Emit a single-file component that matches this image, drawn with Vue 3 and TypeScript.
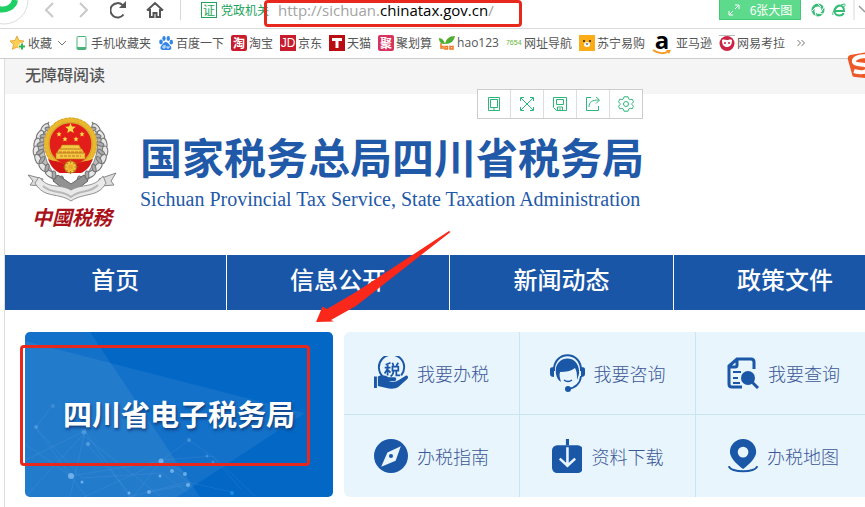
<script setup lang="ts">
interface Bookmark {
  id: string
  label: string
}

interface Service {
  id: string
  label: string
}

const bookmarks: Bookmark[] = [
  { id: 'phone', label: '手机收藏夹' },
  { id: 'baidu', label: '百度一下' },
  { id: 'taobao', label: '淘宝' },
  { id: 'jd', label: '京东' },
  { id: 'tmall', label: '天猫' },
  { id: 'ju', label: '聚划算' },
  { id: 'hao', label: 'hao123' },
  { id: 'nav', label: '网址导航' },
  { id: 'suning', label: '苏宁易购' },
  { id: 'amazon', label: '亚马逊' },
  { id: 'kaola', label: '网易考拉' },
]

const sections: string[] = ['首页', '信息公开', '新闻动态', '政策文件']

const services: Service[] = [
  { id: 'handle', label: '我要办税' },
  { id: 'consult', label: '我要咨询' },
  { id: 'query', label: '我要查询' },
  { id: 'guide', label: '办税指南' },
  { id: 'download', label: '资料下载' },
  { id: 'map', label: '办税地图' },
]

const leftGrain = [
  [19, 13, -50], [14, 20, -60], [11, 28, -75], [10, 36, -90], [12, 44, -110], [17, 52, -130], [24, 59, -145], [32, 64, -155],
]
const teeth = [0, 45, 90, 135, 180, 225, 270, 315]
</script>

<template>
  <div class="window">
    <header class="chrome">
      <svg class="browser-logo" viewBox="0 0 30 28" aria-hidden="true">
        <circle cx="4" cy="0" r="24" fill="#fff" stroke="#dcdcdc" />
        <path d="M-2 9C6 11 14 7 15 0" fill="none" stroke="#1fcf63" stroke-width="6" />
      </svg>
      <div class="controls">
        <button type="button" aria-label="后退"><svg viewBox="0 0 20 20"><path d="M13 3L6 10l7 7" fill="none" stroke="#c9c9c9" stroke-width="2" /></svg></button>
        <button type="button" aria-label="前进"><svg viewBox="0 0 20 20"><path d="M5 3l7 7-7 7" fill="none" stroke="#c9c9c9" stroke-width="2" /></svg></button>
        <button type="button" aria-label="刷新"><svg viewBox="0 0 20 20"><path d="M13.500 14.500A7.200 7.200 0 1 1 12.500 5" fill="none" stroke="#555" stroke-width="2" /><path d="M16 1v7H9z" fill="#555" /></svg></button>
        <button type="button" aria-label="主页"><svg viewBox="0 0 20 20"><path d="M2 10.500L10 3l8 7.500M5 9v8h3.500v-4h3v4H15V9" fill="none" stroke="#555" stroke-width="2" /></svg></button>
      </div>
      <div class="address">
        <span class="cert">证</span>
        <span class="org">党政机关</span>
        <span class="url">http://sichuan.<b>chinatax.gov.cn</b>/</span>
      </div>
      <button type="button" class="pictures">
        <svg viewBox="0 0 12 12" aria-hidden="true"><path d="M7 1h4v4M11 1L7 5M5 11H1V7M1 11l4-4" fill="none" stroke="#fff" /></svg>
        6张大图
      </button>
      <div class="extras">
        <svg viewBox="0 0 14 14" aria-hidden="true">
          <circle cx="7" cy="7" r="5" fill="none" stroke="#35bd75" stroke-width="3" />
          <path d="M6 0l4 4M13 4l-3 5M12 11l-6-1M5 13L4 8M1 8l4-4" stroke="#fff" />
        </svg>
        <svg viewBox="0 0 14 14" aria-hidden="true">
          <path d="M2.500 8H12C12 4 10 2.500 7.500 2.500S2.500 5 2.500 8s2.500 4.500 5 4.500c2 0 3.500-1 4-2.500" fill="none" stroke="#35bd75" stroke-width="2" />
          <path d="M1 12C-1 9 7 2 12 1c2 0 1 2 0 3" fill="none" stroke="#35bd75" />
        </svg>
        <svg class="more" viewBox="0 0 12 28" aria-hidden="true"><path d="M1 0v20" stroke="#d8d8d8" /><path d="M6 6l6 6" stroke="#999" stroke-width="1.500" /></svg>
      </div>
    </header>

    <nav class="bookmarks" aria-label="收藏夹">
      <a href="#" class="bookmark">
        <svg viewBox="0 0 16 16" aria-hidden="true">
          <path d="M7 1l2 4.500 5 .5-3.700 3.400 1 4.900L7 12l-4.500 2.300 1-5L0 6l5-.5z" fill="#fbcf55" stroke="#eda93a" />
          <path d="M12 8v7M8.500 11.500h7" stroke="#fff" stroke-width="4" /><path d="M12 8.500v6M9 11.500h6" stroke="#2fb457" stroke-width="2" />
        </svg>
        收藏
        <svg class="caret" viewBox="0 0 8 8" aria-hidden="true"><path d="M0 2l4 4 4-4" fill="none" stroke="#777" /></svg>
      </a>
      <a v-for="b in bookmarks" :key="b.id" href="#" class="bookmark" :class="b.id">
        <svg v-if="b.id === 'phone'" viewBox="0 0 16 16" aria-hidden="true"><rect x="4" y="1.500" width="9" height="13" rx="1" fill="#fff" stroke="#4bb379" /><path d="M4 13h9" stroke="#4bb379" stroke-width="2" /></svg>
        <svg v-else-if="b.id === 'baidu'" viewBox="0 0 16 16" aria-hidden="true">
          <g fill="#3385e8"><ellipse cx="3" cy="7" rx="1.800" ry="2.400" /><ellipse cx="6" cy="3.500" rx="1.700" ry="2.400" /><ellipse cx="10.300" cy="3.500" rx="1.700" ry="2.400" /><ellipse cx="13.300" cy="7.200" rx="1.700" ry="2.400" /><path d="M8 7c2 0 3 2.500 4.500 4s1 4-1.500 4H5c-3 0-3-3-1.500-4.500S6 7 8 7z" /></g>
          <path d="M7 10v3H5v-2h2M9 11v2h2v-2" fill="none" stroke="#fff" stroke-width=".8" />
        </svg>
        <span v-else-if="b.id === 'taobao'" class="badge">淘</span>
        <span v-else-if="b.id === 'jd'" class="badge latin">JD</span>
        <svg v-else-if="b.id === 'tmall'" viewBox="0 0 16 16" aria-hidden="true"><path d="M0 0h16v16H0z" fill="#b90d12" /><path d="M3 3h10v3H9.500v7h-3V6H3z" fill="#fff" /></svg>
        <span v-else-if="b.id === 'ju'" class="badge pink">聚</span>
        <svg v-else-if="b.id === 'hao'" viewBox="0 0 16 16" aria-hidden="true">
          <path d="M6 9C5 5 3 3 0 3c0 4 2 6 6 6zM6 9C7 4 10 1 16 1c-1 5-4 8-10 8z" fill="#4fae32" />
          <path d="M2 8v6M2 11.500h2V14M8.500 11.500H6V14h2.500zM11 11.500h3V14h-3z" fill="none" stroke="#f0781e" stroke-width="1.500" />
        </svg>
        <span v-else-if="b.id === 'nav'" class="digits">7654</span>
        <svg v-else-if="b.id === 'suning'" viewBox="0 0 16 16" aria-hidden="true"><path d="M0 0h16v16H0z" fill="#fbac17" /><path d="M5 5v2M11 5v2" stroke="#222" stroke-width="1.500" /><ellipse cx="8" cy="9.500" rx="3" ry="2.500" fill="#fff" /><path d="M6.500 8.500h3L8 10z" fill="#222" /></svg>
        <span v-else-if="b.id === 'amazon'" class="amazon-mark">a<svg viewBox="0 0 20 6" aria-hidden="true"><path d="M1 1c5 4 12 4 16 1" fill="none" stroke="#f49b20" stroke-width="2" /><path d="M14 1h5l-2 4z" fill="#f49b20" /></svg></span>
        <svg v-else viewBox="0 0 16 16" aria-hidden="true"><path d="M0 .5h16" stroke="#bbb" /><circle cx="8" cy="8.500" r="7.500" fill="#cb2445" /><path d="M3 5c2-1 3 0 5 0s3-1 5 0c0 5-2 7-5 7s-5-2-5-7z" fill="#fff" /><circle cx="6" cy="8" r="1" fill="#cb2445" /><circle cx="10" cy="8" r="1" fill="#cb2445" /></svg>
        <span>{{ b.label }}</span>
      </a>
      <button type="button" class="overflow" aria-label="更多收藏"><svg viewBox="0 0 8 8"><path d="M.5 1l3 3-3 3M4.500 1l3 3-3 3" fill="none" stroke="#777" /></svg></button>
    </nav>

    <main class="page">
      <div class="access"><a href="#">无障碍阅读</a></div>

      <div class="masthead">
        <div class="logo">
          <svg viewBox="0 0 92 88" aria-hidden="true">
            <g fill="#e7e7e7" stroke="#777" stroke-width="1.100">
              <g v-for="side in [1, -1]" :key="side" :transform="side === 1 ? '' : 'translate(89 0) scale(-1 1)'">
                <path d="M23 7C6 22 4 48 28 65l8 2C18 52 12 28 23 7z" fill="#bdbdbd" stroke="#8b8b8b" />
                <ellipse v-for="(g, i) in leftGrain" :key="i" :cx="g[0]" :cy="g[1]" rx="5" ry="2.800" :transform="`rotate(${g[2]} ${g[0]} ${g[1]})`" />
                <ellipse v-for="(g, i) in leftGrain" :key="'n' + i" :cx="g[0] + 4" :cy="g[1] + 1" rx="4" ry="1.800" fill="#aaa" :transform="`rotate(${g[2] + 55} ${g[0] + 4} ${g[1] + 1})`" />
              </g>
            </g>
            <circle cx="44.500" cy="29" r="24" fill="#e31d1a" stroke="#e8b82f" stroke-width="5" />
            <circle cx="44.500" cy="29" r="26" fill="none" stroke="#d3a02a" stroke-dasharray="2 2" />
            <circle cx="44.500" cy="29" r="21.500" fill="none" stroke="#d9a52c" stroke-width="1.500" />
            <path d="M44.500 8l1.400 3.600 3.900.2-3 2.400 1 3.800-3.300-2.100-3.300 2.100 1-3.800-3-2.400 3.900-.2z" fill="#ffe04a" />
            <g fill="#ffe04a"><path v-for="(s, i) in [[33, 19], [39, 24], [50, 24], [56, 19]]" :key="i" :transform="`translate(${s[0]} ${s[1]})`" d="M0-2.500L.8-.8l1.800.1L1.200.5l.4 1.900L0 1.400l-1.600 1 .4-1.900-1.400-1.200 1.800-.1z" /></g>
            <path d="M36 30h17l2 4H34zM33 34h23l2 4H31zM30 38h29v6H30z" fill="#f4c844" stroke="#bd7f15" stroke-width=".6" />
            <path d="M33 37h23M34 41h21" stroke="#b95a15" stroke-width=".8" stroke-dasharray="3 1" />
            <path d="M22 44c7 3 13 2 16 5 3-3 9-3 13 0 3-3 9-2 16-5-3 8-7 12-12 14H34c-5-2-9-6-12-14z" fill="#d41714" />
            <circle cx="44.500" cy="52" r="6" fill="#f2c33a" stroke="#b17a18" stroke-width=".8" />
            <path v-for="t in teeth" :key="t" d="M44.500 45v3" stroke="#b17a18" :transform="`rotate(${t} 44.500 52)`" />
            <circle cx="44.500" cy="52" r="2.500" fill="#e9a92c" />
            <path d="M32 60l13 9 13-9 4 6-12 9H39l-12-9z" fill="#929292" stroke="#666" />
            <path d="M2 60l15 4-2 7-11-1 3-4zM90 58l-17 6 2 7 13-1-3-4z" fill="#ddd" stroke="#888" />
            <path d="M13 62c10 13 20 6 32 13 12-7 22-1 32-14l3 7c-8 15-22 9-35 18C32 77 18 84 9 68z" fill="#e9e9e9" stroke="#8f8f8f" />
            <path d="M17 71c10 9 19 3 28 11 9-8 18-3 27-12" fill="none" stroke="#b8b8b8" stroke-width="2" />
          </svg>
          <span class="calligraphy">中國税務</span>
        </div>
        <div class="titles">
          <h1>国家税务总局四川省税务局</h1>
          <p>Sichuan Provincial Tax Service, State Taxation Administration</p>
        </div>
      </div>

      <nav class="sections" aria-label="主导航">
        <a v-for="s in sections" :key="s" href="#">{{ s }}</a>
      </nav>

      <div class="hero">
        <a href="#" class="banner">
          <svg viewBox="0 0 308 165" preserveAspectRatio="none" aria-hidden="true">
            <path d="M0 0h65l110 165H0z" fill="#fff" fill-opacity=".07" />
            <path d="M0 9l280 72-128 84H0z" fill="#fff" fill-opacity=".07" />
            <g fill="none" stroke="#b9dcff" stroke-opacity=".13" stroke-width=".7">
              <path d="M0 128l60-29 45 66M0 165l58-62 78 62M11 96l46 50 80-5 26 20M0 112l46 32 91-15 23 12M60 99L45 165M63 113l45 52 28-36 30 23-42 8M164 108l-27 20 51-4 42 40M164 108l24 17 28 32M27 74l-16 22 50 69M59 165l78-36M104 165l58-15 45 10" />
            </g>
            <g fill="#9bd1fb" fill-opacity=".6">
              <circle cx="59" cy="100" r="2.500" fill-opacity=".3" /><circle cx="63" cy="112" r="2" fill-opacity=".4" /><circle cx="46" cy="144" r="3" /><circle cx="57" cy="150" r="1.500" /><circle cx="136" cy="129" r="2.500" /><circle cx="147" cy="139" r="2" /><circle cx="160" cy="142" r="2" /><circle cx="163" cy="153" r="2" /><circle cx="124" cy="160" r="2" /><circle cx="104" cy="161" r="1.500" /><circle cx="135" cy="144" r="1.500" /><circle cx="164" cy="108" r="2" fill-opacity=".3" /><circle cx="182" cy="124" r="1.500" fill-opacity=".3" /><circle cx="188" cy="130" r="1.500" fill-opacity=".3" /><circle cx="11" cy="95" r="2" fill-opacity=".3" /><circle cx="28" cy="74" r="2" fill-opacity=".2" /><circle cx="207" cy="161" r="2" fill="#25a4f3" />
            </g>
          </svg>
          <span>四川省电子税务局</span>
        </a>
        <div class="services">
          <a v-for="s in services" :key="s.id" href="#" :class="s.id">
            <svg v-if="s.id === 'handle'" viewBox="0 0 35 35" aria-hidden="true">
              <path d="M9 21A13 13 0 1 1 28 20" fill="none" stroke="#1b57a7" stroke-width="2" />
              <path d="M17 7l-5 2M11 12h6M14 8v12M14 13l-3 5M14 14l3 3M19 7l1 3M25 7l-2 3M19 11h6v4h-6zM20 15c0 3-1 5-3 6M23 15v5h4" fill="none" stroke="#1b57a7" stroke-width="1.800" />
              <path d="M0 21h3v12H0zM4 21c4-2 8-1 11 1h6c3 0 2 4 0 4h-6c5 2 9 0 18-6 2 0 3 2 1 4l-9 8c-3 2-8 2-12 1l-9-2z" fill="#1b57a7" />
            </svg>
            <svg v-else-if="s.id === 'consult'" viewBox="0 0 35 38" aria-hidden="true">
              <path d="M4 17C3-4 32-4 31 17" fill="none" stroke="#1b57a7" stroke-width="2" />
              <path d="M6 20C3 0 31-1 29 20l-2 6c0-5 0-9-2-12-4 3-9 4-15 4-1 4 0 6 1 10-3-2-4-4-5-8z" fill="#1b57a7" />
              <path d="M0 15q0-2 4-2v10q-4 0-4-3zM35 15q0-2-4-2v10q4 0 4-3z" fill="#1b57a7" />
              <path d="M14 26q4 3 8 0" fill="none" stroke="#1b57a7" stroke-width="1.500" /><path d="M31 22q-1 11-13 13" fill="none" stroke="#1b57a7" stroke-width="1.800" />
              <circle cx="18" cy="35" r="3" fill="#1b57a7" />
            </svg>
            <svg v-else-if="s.id === 'query'" viewBox="0 0 32 32" aria-hidden="true">
              <path d="M15 30H5q-3 0-3-3V9l8-7h14q3 0 3 3v7M2 10h6q2 0 2-2V2" fill="none" stroke="#1b57a7" stroke-width="3" />
              <path d="M6 15h8M6 21h5M6 26h7" stroke="#1b57a7" stroke-width="2" /><circle cx="21" cy="21" r="7" fill="#1b57a7" /><path d="M25 25l6 6" stroke="#1b57a7" stroke-width="3" />
            </svg>
            <svg v-else-if="s.id === 'guide'" viewBox="0 0 33 33" aria-hidden="true"><circle cx="16.500" cy="16.500" r="16.500" fill="#1b57a7" /><path d="M26 7l-5 14-14 6 6-14z" fill="#e8f5fd" /><circle cx="16.500" cy="16.500" r="2" fill="#1b57a7" /></svg>
            <svg v-else-if="s.id === 'download'" viewBox="0 0 30 33" aria-hidden="true"><rect y="6" width="30" height="27" rx="5" fill="#1b57a7" /><path d="M13.500 0h3v6h-3z" fill="#1b57a7" /><path d="M15 8v17M7.500 19l7.500 7 7.500-7" fill="none" stroke="#e8f5fd" stroke-width="2.500" /></svg>
            <svg v-else viewBox="0 0 31 35" aria-hidden="true"><path fill-rule="evenodd" d="M15.500 0C8 0 2 6 2 13c0 6 6 12 13.500 18C23 25 29 19 29 13 29 6 23 0 15.500 0zm0 8a5.500 5.500 0 1 1 0 11 5.500 5.500 0 0 1 0-11z" fill="#1b57a7" /><path d="M1 28c1 7 28 7 29 0" fill="none" stroke="#1b57a7" stroke-width="2" /></svg>
            {{ s.label }}
          </a>
        </div>
      </div>
    </main>

    <div class="tools" role="toolbar" aria-label="页面工具">
      <button type="button" aria-label="手机"><svg viewBox="0 0 16 16"><path d="M2.500 1.500h11v13h-11zM4.500 3.500h7v8h-7zM7 13h2" /></svg></button>
      <button type="button" aria-label="全屏"><svg viewBox="0 0 16 16"><path d="M1.500 5V1.500H5M11 1.500h3.500V5M14.500 11v3.500H11M5 14.500H1.500V11M2 2l12 12M14 2L2 14" /></svg></button>
      <button type="button" aria-label="保存"><svg viewBox="0 0 16 16"><path d="M1.500 1.500h13v13h-10l-3-3zM4.500 3.500h7v5h-7zM5.500 14v-3h5v3M8 12v2" /></svg></button>
      <button type="button" aria-label="分享"><svg viewBox="0 0 16 16"><path d="M6 1.500H1.500v13h12V10M4 11c0-5 3-7 10-7M11 1l3.500 3L11 7.500" /></svg></button>
      <button type="button" aria-label="设置"><svg viewBox="0 0 16 16"><path d="M6 .8h4l.6 2 1.600.9 2-.5 1.300 2.600L14 7.500v1.200l1.500 1.500-1.300 2.600-2-.5-1.600.9-.6 2H6l-.6-2-1.600-.9-2 .5L.5 10.200 2 8.700V7.500L.5 5.800l1.300-2.600 2 .5 1.600-.9z" /><circle cx="8" cy="8" r="2.500" /></svg></button>
    </div>

    <svg class="ime" viewBox="0 0 28 28" aria-hidden="true">
      <path d="M3 4L28 0v28L8 26q-3 0-3-3L1 9q-1-4 2-5z" fill="#ed5a27" />
      <path d="M22 6C14 4 6 7 7 11s15 1 14 6-8 5-14 3" fill="none" stroke="#fff" stroke-width="4" />
    </svg>

    <div class="mark mark-url"></div>
    <div class="mark mark-banner"></div>
    <svg class="arrow" viewBox="0 0 136 92" aria-hidden="true"><path d="M0 91l6.500-15.500L11 78 40 61 133 0l1.500 1L40 75 15 89l3 1.500z" fill="#f9281b" /></svg>
  </div>
</template>

<style>
body {
  background: #fff;
}
</style>

<style scoped>
.window {
  position: relative;
  overflow: hidden;
  min-height: 100vh;
  box-sizing: border-box;
  display: flex;
  flex-direction: column;
  font-family: "Noto Sans CJK SC", sans-serif;
  font-size: 12px;
  line-height: 16px;
  color: #555;
}
a {
  color: inherit;
  text-decoration: none;
}
button {
  padding: 0;
  border: 0;
  background: none;
  font: inherit;
  color: inherit;
}
svg {
  display: block;
  flex: none;
}

.chrome {
  display: flex;
  height: 28px;
  border-bottom: 1px solid #d9d9d9;
}
.browser-logo {
  width: 30px;
  height: 28px;
}
.controls {
  display: flex;
  gap: 15px;
  padding-left: 10px;
  width: 140px;
  align-self: flex-start;
  border-right: 1px solid #d8d8d8;
}
.controls svg {
  width: 20px;
  height: 20px;
}
.address {
  flex: 1;
  display: flex;
  align-items: center;
  height: 20px;
  padding-left: 20px;
  white-space: nowrap;
}
.cert {
  width: 14px;
  border: 1px solid #21a35b;
  color: #21a35b;
  line-height: 14px;
  text-align: center;
}
.org {
  width: 57px;
  padding-left: 4px;
  box-sizing: border-box;
  color: #21a35b;
}
.url {
  padding-left: 4px;
  font-family: "Open Sans", "Noto Sans", sans-serif;
  font-size: 15px;
  line-height: 20px;
  color: #a3a3a3;
}
.url b {
  font-weight: 400;
  color: #000;
}
.pictures {
  display: flex;
  align-items: center;
  justify-content: center;
  gap: 10px;
  width: 82px;
  height: 20px;
  border: 1px solid #43c877;
  border-top: 0;
  box-sizing: border-box;
  background: #5dda8b;
  color: #fff;
}
.pictures svg {
  width: 12px;
  height: 12px;
}
.extras {
  display: flex;
  gap: 7px;
  padding-left: 10px;
}
.extras svg {
  width: 14px;
  height: 14px;
  margin-top: 3px;
}
.extras .more {
  width: 12px;
  height: 28px;
  margin-top: 0;
}

.bookmarks {
  display: flex;
  align-items: center;
  gap: 7px;
  height: 27px;
  padding: 0 0 2px 10px;
  border-bottom: 1px solid #ccc;
  white-space: nowrap;
}
.bookmark {
  display: flex;
  align-items: center;
  gap: 2px;
}
.bookmark svg {
  width: 16px;
  height: 16px;
}
.bookmark .caret {
  width: 8px;
  height: 8px;
  margin-left: 4px;
}
.badge {
  width: 16px;
  height: 16px;
  border-radius: 2px;
  background: #c81c2c;
  color: #fff;
  font-weight: 700;
  text-align: center;
}
.badge.pink {
  background: #d8325f;
}
.badge.latin {
  border-radius: 0;
  font-family: "Liberation Sans", sans-serif;
  font-weight: 400;
}
.digits {
  width: 16px;
  font-family: "Liberation Sans", sans-serif;
  font-size: 7px;
  color: #63b535;
}
.hao {
  font-family: "Open Sans", sans-serif;
}
.amazon {
  gap: 4px;
}
.amazon-mark {
  width: 20px;
  height: 24px;
  font: 700 24px/18px "Open Sans", sans-serif;
  color: #000;
  text-align: center;
}
.amazon-mark svg {
  width: 20px;
  height: 6px;
}
.overflow {
  padding-left: 5px;
}
.overflow svg {
  width: 8px;
  height: 8px;
}

.page {
  flex: 1;
  margin-left: 4px;
  border-left: 1px solid #ddd;
}
.access {
  padding: 5px 20px 10px;
  background: #f5f5f5;
  font-size: 16px;
  font-weight: 500;
  line-height: 20px;
}
.masthead {
  display: flex;
  align-items: flex-start;
  gap: 22px;
  padding: 21px 21px 24px;
}
.logo {
  width: 92px;
  text-align: center;
}
.logo svg {
  width: 92px;
  height: 88px;
}
.calligraphy {
  display: block;
  color: #a8121b;
  font-size: 20px;
  font-weight: 700;
  font-style: italic;
  line-height: 28px;
}
.titles {
  padding-top: 17px;
  color: #1f59a8;
  white-space: nowrap;
}
h1 {
  margin: 0;
  font-size: 42px;
  font-weight: 700;
  line-height: 48px;
}
.titles p {
  margin: 7px 0 0;
  font: 20px/24px "Liberation Serif", serif;
}

.sections {
  display: flex;
  background: #1a56a7;
}
.sections a {
  flex: 0 0 26%;
  box-sizing: border-box;
  border-right: 1px solid #fff;
  padding: 8px 0 15px;
  color: #fff;
  font-size: 24px;
  font-weight: 500;
  line-height: 32px;
  text-align: center;
}
.sections a:first-child {
  flex-basis: calc(26% - 2px);
}

.hero {
  display: flex;
  gap: 11px;
  padding: 22px 0 10px 20px;
}
.banner {
  flex: 0 0 308px;
  display: grid;
  overflow: hidden;
  border-radius: 5px;
  background: #0267c5;
  color: #fff;
  font-size: 29px;
  font-weight: 700;
  line-height: 36px;
  text-shadow: 1px 2px 3px #123d7c;
}
.banner > * {
  grid-area: 1 / 1;
}
.banner svg {
  width: 100%;
  height: 100%;
}
.banner span {
  align-self: center;
  padding-bottom: 4px;
  text-align: center;
}
.services {
  flex: 1;
  display: grid;
  grid-template-columns: repeat(3, 1fr);
  margin-right: -7px;
  border-radius: 6px;
  background: #e8f5fd;
}
.services a {
  display: flex;
  align-items: center;
  justify-content: center;
  gap: 9px;
  height: 82px;
  border-right: 1px solid #c9e5f3;
  color: #3c5797;
  font-size: 18px;
  font-weight: 300;
  line-height: 24px;
}
.services a:nth-child(-n + 3) {
  border-bottom: 1px solid #c9e5f3;
}
.services svg {
  width: auto;
  height: 34px;
}
.services .query svg {
  height: 32px;
}
.services .consult svg {
  height: 38px;
}

.tools {
  position: absolute;
  top: 89px;
  left: 477px;
  display: flex;
  border: 1px solid #ccc;
  background: #fff;
}
.tools button {
  padding: 6px 8px;
}
.tools button + button {
  border-left: 1px solid #ddd;
}
.tools svg {
  width: 16px;
  height: 16px;
  fill: none;
  stroke: #2cb678;
}
.ime {
  position: absolute;
  top: 51px;
  right: -10px;
  width: 28px;
  height: 28px;
}
.mark {
  position: absolute;
  box-sizing: border-box;
  border: 3px solid #e8271d;
  border-radius: 4px;
  pointer-events: none;
}
.mark-url {
  top: 0;
  left: 264px;
  width: 258px;
  height: 27px;
}
.mark-banner {
  top: 345px;
  left: 20px;
  width: 290px;
  height: 121px;
}
.arrow {
  position: absolute;
  top: 231px;
  left: 316px;
  width: 136px;
  height: 92px;
  pointer-events: none;
}
</style>
